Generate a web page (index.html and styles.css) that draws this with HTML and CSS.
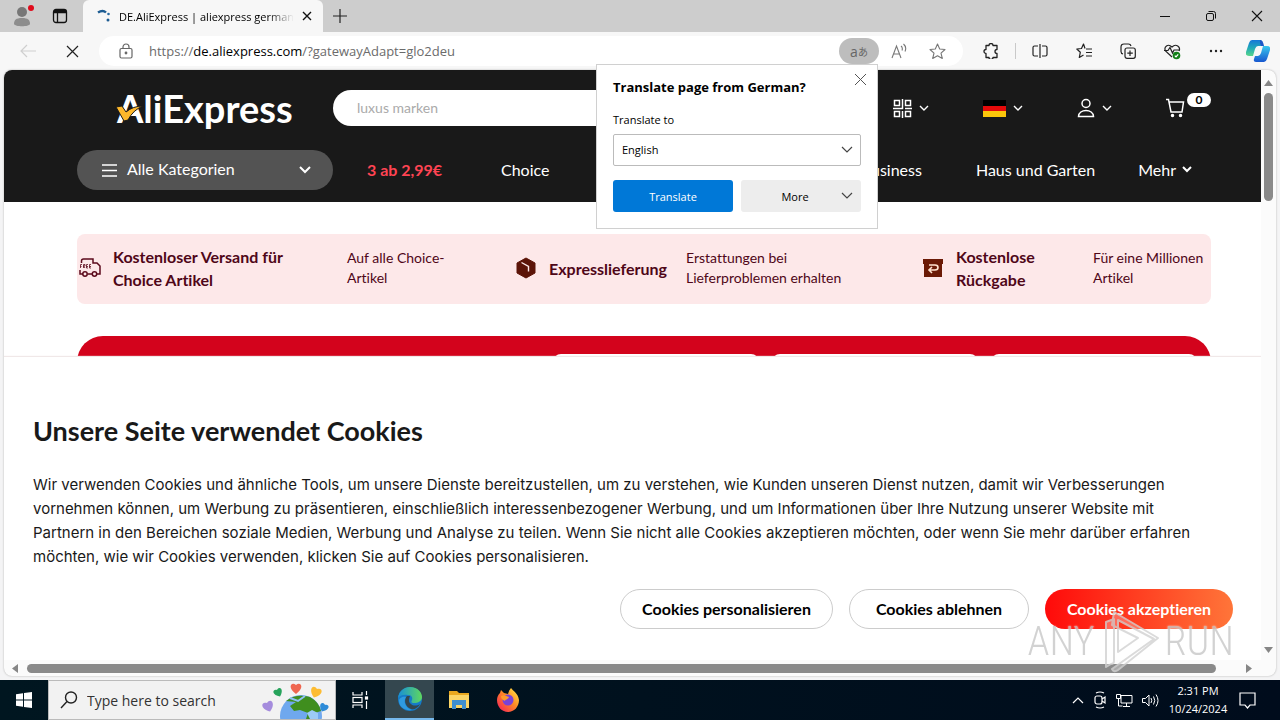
FILE: index.html
```html
<!DOCTYPE html>
<html lang="de">
<head>
<meta charset="utf-8">
<title>DE.AliExpress</title>
<link rel="stylesheet" href="styles.css">
</head>
<body>
<div class="browser">
  <div class="tabstrip">
    <button class="icon-btn profile" aria-label="Profile">
      <svg width="26" height="24" viewBox="0 0 26 24"><circle cx="12" cy="8" r="5" fill="#777"/><path d="M4 20c0-4 2-6 8-6s8 2 8 6c-1 3-15 3-16 0z" fill="#8d8d8d"/><circle cx="21" cy="4" r="3" fill="#e00b1c"/></svg>
    </button>
    <button class="icon-btn workspaces" aria-label="Tab actions">
      <svg width="16" height="16" viewBox="0 0 16 16" fill="none" stroke="#111" stroke-width="1.3"><rect x="1.5" y="1.5" width="13" height="13" rx="2.5"/><path d="M1.5 4.5h13M5.5 4.5v10" /><path d="M2 3h12" stroke-width="2"/></svg>
    </button>
    <div class="tab">
      <svg width="14" height="14" viewBox="0 0 14 14" fill="none"><path d="M1 3.5c3-2 6-2 8 0" stroke="#1d5c92" stroke-width="2.4"/><circle cx="11.500" cy="5" r="1.300" fill="#2b6ba3"/><circle cx="11" cy="11" r="1.500" fill="#1d5c92"/></svg>
      <span class="tab-title">DE.AliExpress | aliexpress german</span>
      <button class="icon-btn" aria-label="Close tab"><svg width="10" height="10" viewBox="0 0 10 10" stroke="#111" stroke-width="1.4"><path d="M1 1l8 8M9 1L1 9"/></svg></button>
    </div>
    <button class="icon-btn newtab" aria-label="New tab"><svg width="14" height="14" viewBox="0 0 14 14" stroke="#222" stroke-width="1.2"><path d="M7 0v14M0 7h14"/></svg></button>
    <div class="window-controls">
      <button class="icon-btn" aria-label="Minimize"><svg width="12" height="12" viewBox="0 0 12 12" stroke="#111"><path d="M1 6.500h10"/></svg></button>
      <button class="icon-btn" aria-label="Restore"><svg width="12" height="12" viewBox="0 0 12 12" fill="none" stroke="#111"><rect x="1.500" y="3.500" width="7" height="7" rx="1.500"/><path d="M3.500 1.500h5q2 0 2 2v5"/></svg></button>
      <button class="icon-btn" aria-label="Close"><svg width="12" height="12" viewBox="0 0 12 12" stroke="#111" stroke-width="1.100"><path d="M1 1l10 10M11 1L1 11"/></svg></button>
    </div>
  </div>

  <div class="toolbar">
    <button class="icon-btn back" aria-label="Back"><svg width="16" height="14" viewBox="0 0 16 14" fill="none" stroke="#cfcfcf" stroke-width="1.200"><path d="M16 7H1M7 1L1 7l6 6"/></svg></button>
    <button class="icon-btn stop" aria-label="Stop"><svg width="13" height="13" viewBox="0 0 13 13" stroke="#222" stroke-width="1.200"><path d="M1 1l11 11M12 1L1 12"/></svg></button>
    <div class="address">
      <svg width="14" height="16" viewBox="0 0 14 16" fill="none" stroke="#666" stroke-width="1.200"><rect x="1" y="5.500" width="12" height="9.500" rx="1.500"/><path d="M4 5.500V4a3 3 0 0 1 6 0v1.500"/><circle cx="7" cy="10" r="0.800" fill="#666"/></svg>
      <span class="url">https://<b>de.aliexpress.com</b>/?gatewayAdapt=glo2deu</span>
      <button class="icon-btn translate-pill" aria-label="Translate">a<small>あ</small></button>
      <button class="icon-btn" aria-label="Read aloud"><svg width="16" height="16" viewBox="0 0 16 16" fill="none" stroke="#777" stroke-width="1.100"><path d="M1 15L5.500 3 10 15M2.500 11h6M10 3q2 1.500 1 4.500M12.500 1q3.500 3 1.500 7.500"/></svg></button>
      <button class="icon-btn" aria-label="Add to favorites"><svg width="17" height="17" viewBox="0 0 17 17" fill="none" stroke="#777" stroke-width="1.100" stroke-linejoin="round"><path d="M8.500 1l2.200 5 5.300.5-4 3.600 1.300 5.400-4.800-2.800-4.800 2.800L5 10.100 1 6.500 6.300 6z"/></svg></button>
    </div>
    <div class="tools">
      <button class="icon-btn" aria-label="Extensions"><svg width="16" height="16" viewBox="0 0 16 16" fill="none" stroke="#222" stroke-width="1.300" stroke-linejoin="round"><path d="M3 2.500h3a2 2 0 0 1 4 0h4v4a2 2 0 0 0 0 4v4h-4a2 2 0 0 1-4 0H3v-4a2 2 0 0 1 0-4z"/></svg></button>
      <span class="divider"></span>
      <button class="icon-btn" aria-label="Split screen"><svg width="16" height="16" viewBox="0 0 16 16" fill="none" stroke="#222" stroke-width="1.200"><path d="M6 3H2.500Q1 3 1 4.500v7Q1 13 2.500 13H6M10 3h3.500Q15 3 15 4.500v7q0 1.500-1.500 1.500H10M8 1v14"/></svg></button>
      <button class="icon-btn" aria-label="Favorites"><svg width="16" height="16" viewBox="0 0 16 16" fill="none" stroke="#222" stroke-width="1.200" stroke-linejoin="round"><path d="M9 5.500L7.500 1 5.500 5.500.8 6l3.500 3.300L3.300 14.500 7.500 12M10 6h6M10 9.500h6M10 13h6"/></svg></button>
      <button class="icon-btn" aria-label="Collections"><svg width="16" height="16" viewBox="0 0 16 16" fill="none" stroke="#222" stroke-width="1.200"><path d="M3 11Q1 10.500 1 8.500V4q0-3 3-3h4.500q2 0 2.500 2"/><rect x="5" y="5" width="10.300" height="10.300" rx="2"/><path d="M10 7.500v5.500M7.300 10.200h5.500"/></svg></button>
      <button class="icon-btn" aria-label="Browser essentials"><svg width="17" height="17" viewBox="0 0 17 17" fill="none" stroke="#222" stroke-width="1.200"><path d="M8 14L1.500 8C-.5 4 4 0 8 4c4-4 9 0 7 4M0 7.500h4l2-3 2.500 5.500L10 7h6"/><circle cx="12.500" cy="12.500" r="3.800" fill="#138018" stroke="none"/><path d="M10.800 12.700l1.200 1.200 2.200-2.500" stroke="#fff"/></svg></button>
      <button class="icon-btn" aria-label="Settings and more"><svg width="14" height="4" viewBox="0 0 14 4" fill="#222"><circle cx="2" cy="2" r="1.200"/><circle cx="7" cy="2" r="1.200"/><circle cx="12" cy="2" r="1.200"/></svg></button>
      <button class="icon-btn copilot" aria-label="Copilot"><svg width="24" height="24" viewBox="0 0 24 24"><defs><linearGradient id="cpa" x1="0" y1="0" x2="0" y2="1"><stop offset="0" stop-color="#1677d8"/><stop offset=".5" stop-color="#21aab8"/><stop offset="1" stop-color="#58d68a"/></linearGradient><linearGradient id="cpb" x1="0" y1="0" x2="0" y2="1"><stop offset="0" stop-color="#39c7ee"/><stop offset="1" stop-color="#1757cf"/></linearGradient></defs><path d="M6 1h8q3 0 2 3l-1 3h-3q-2 0-3 3l-2 7H3q-4 0-3-4L3 4q1-3 3-3z" fill="url(#cpa)"/><path d="M18 23h-8q-3 0-2-3l1-3h3q2 0 3-3l2-7h4q4 0 3 4l-3 9q-1 3-3 3z" fill="url(#cpb)"/><path d="M14 1q3 0 4 6h-3l-1-3z" fill="#1c56c7"/></svg></button>
    </div>
  </div>

  <div class="viewport">
    <div class="page">
      <header class="site-header">
        <div class="header-top">
          <a class="logo" href="#">AliExpress<svg class="logo-check" width="29" height="18" viewBox="0 0 29 18"><path d="M1 3l6-1 4 6Q18 2 28 2 18 6 13 16L9 17z" fill="#fdb72b" stroke="#191919"/></svg></a>
          <input class="search" type="text" placeholder="luxus marken" aria-label="Suche">
          <div class="header-actions">
            <button class="icon-btn" aria-label="App"><svg width="19" height="19" viewBox="0 0 19 19" fill="none" stroke="#fff" stroke-width="1.500"><rect x="1.500" y="1.500" width="5" height="5"/><rect x="12.500" y="1.500" width="5" height="5"/><rect x="1.500" y="12.500" width="5" height="5"/><rect x="12.500" y="12.500" width="5" height="5"/><path d="M9.500 0v9.500H0M12 9.500h7M9.500 12v7"/></svg><svg class="chev" width="10" height="6" viewBox="0 0 10 6"><path d="M1 1l4 4 4-4"/></svg></button>
            <button class="icon-btn" aria-label="Deutschland"><svg width="23" height="17" viewBox="0 0 23 17"><path d="M0 0h23v6H0z" fill="#000"/><path d="M0 6h23v5H0z" fill="#e50a0a"/><path d="M0 11h23v6H0z" fill="#fbc60b"/></svg><svg class="chev" width="10" height="6" viewBox="0 0 10 6"><path d="M1 1l4 4 4-4"/></svg></button>
            <button class="icon-btn" aria-label="Konto"><svg width="18" height="20" viewBox="0 0 18 20" fill="none" stroke="#fff" stroke-width="1.500"><circle cx="9" cy="5.500" r="4"/><path d="M1.500 18.500c0-8 15-8 15 0z"/></svg><svg class="chev" width="10" height="6" viewBox="0 0 10 6"><path d="M1 1l4 4 4-4"/></svg></button>
            <button class="icon-btn cart" aria-label="Warenkorb"><svg width="19" height="20" viewBox="0 0 19 20" fill="none" stroke="#fff" stroke-width="1.500"><path d="M0 1.500h2.500l2.500 12.500h11l1.500-10H3.500"/><circle cx="6.500" cy="17.500" r="1" fill="#fff"/><circle cx="14.500" cy="17.500" r="1" fill="#fff"/></svg><span class="cart-count">0</span></button>
          </div>
        </div>
        <nav class="header-nav">
          <button class="categories"><svg width="15" height="13" viewBox="0 0 15 13" stroke="#fff" stroke-width="1.500"><path d="M0 1h15M0 6.500h15M0 12h15"/></svg><span>Alle Kategorien</span><svg class="chev" width="12" height="8" viewBox="0 0 12 8"><path d="M1 1l5 5 5-5" stroke-width="2"/></svg></button>
          <a class="promo" href="#">3 ab 2,99€</a>
          <a href="#">Choice</a>
          <a class="push" href="#">Business</a>
          <a href="#">Haus und Garten</a>
          <a class="more-link" href="#">Mehr <svg class="chev" width="10" height="7" viewBox="0 0 10 7"><path d="M1 1l4 4 4-4" stroke-width="2"/></svg></a>
        </nav>
      </header>
      <main class="content">
        <section class="benefits">
          <div class="benefit">
            <svg width="22" height="20" viewBox="0 0 22 20" fill="none" stroke="#5c0a1c" stroke-width="1.500"><path d="M2.500 5V3q0-2 2-2h9.500v4h4l3 3v8h-3M4 16H1v-4M8.500 16h5"/><circle cx="6" cy="16" r="2.200"/><circle cx="15.500" cy="16" r="2.200"/><path d="M1.500 10V6.500h1.500M1.500 8.500h1M4.500 10V6.500h1.500v1.500H4.500l1.500 2M9 6.500H7.500V10H9M7.500 8.500H9M12 6.500h-1.500V10H12M10.500 8.500H12" stroke-width=".8"/></svg>
            <h3 class="wide">Kostenloser Versand für Choice Artikel</h3><p class="short">Auf alle Choice-Artikel</p>
          </div>
          <div class="benefit">
            <svg width="22" height="22" viewBox="0 0 22 22"><path d="M11 1l9 5v10l-9 5-9-5V6z" fill="#5c1408" stroke="#5c1408" stroke-linejoin="round"/><path d="M6.500 5.500l7 4v5" fill="none" stroke="#fde8e9" stroke-width="1.400"/></svg>
            <h3>Expresslieferung</h3><p>Erstattungen bei Lieferproblemen erhalten</p>
          </div>
          <div class="benefit">
            <svg width="22" height="20" viewBox="0 0 22 20"><path d="M1 1h20v5h-1v13H2V6H1z" fill="#6b1a06"/><path d="M7 7h6q3 0 3 2.500t-3 2.500H8M10 9l-3 3 3 3" fill="none" stroke="#ffe3cf" stroke-width="1.600"/></svg>
            <h3>Kostenlose Rückgabe</h3><p>Für eine Millionen Artikel</p>
          </div>
        </section>
        <section class="deals"><div class="deal-card"></div><div class="deal-card"></div><div class="deal-card"></div></section>
      </main>
      <section class="cookie-banner">
        <h2>Unsere Seite verwendet Cookies</h2>
        <p>Wir verwenden Cookies und ähnliche Tools, um unsere Dienste bereitzustellen, um zu verstehen, wie Kunden unseren Dienst nutzen, damit wir Verbesserungen<br>vornehmen können, um Werbung zu präsentieren, einschließlich interessenbezogener Werbung, und um Informationen über Ihre Nutzung unserer Website mit<br>Partnern in den Bereichen soziale Medien, Werbung und Analyse zu teilen. Wenn Sie nicht alle Cookies akzeptieren möchten, oder wenn Sie mehr darüber erfahren<br>möchten, wie wir Cookies verwenden, klicken Sie auf Cookies personalisieren.</p>
        <div class="cookie-actions">
          <button class="customize">Cookies personalisieren</button>
          <button class="reject">Cookies ablehnen</button>
          <button class="accept">Cookies akzeptieren</button>
        </div>
      </section>
    </div>
    <div class="vscroll"><svg width="9" height="6" viewBox="0 0 9 6"><path d="M0 6l4.500-6L9 6z"/></svg><span class="vthumb"></span><svg class="down" width="9" height="6" viewBox="0 0 9 6"><path d="M0 0l4.500 6L9 0z"/></svg></div>
    <div class="hscroll"><svg width="6" height="9" viewBox="0 0 6 9"><path d="M6 0L0 4.500 6 9z"/></svg><span class="hthumb"></span><svg width="6" height="9" viewBox="0 0 6 9"><path d="M0 0l6 4.500L0 9z"/></svg></div>
  </div>

  <div class="popup" role="dialog" aria-labelledby="popup-title">
    <button class="icon-btn popup-close" aria-label="Close"><svg width="13" height="13" viewBox="0 0 13 13" stroke="#555"><path d="M1 1l11 11M12 1L1 12"/></svg></button>
    <h2 id="popup-title">Translate page from German?</h2>
    <label for="lang">Translate to</label>
    <div class="select-wrap"><select id="lang"><option>English</option></select><svg class="dark-chev" width="12" height="8" viewBox="0 0 12 8"><path d="M1 1l5 5 5-5"/></svg></div>
    <div class="popup-actions"><button class="primary">Translate</button><button class="secondary">More<svg class="dark-chev" width="12" height="8" viewBox="0 0 12 8"><path d="M1 1l5 5 5-5"/></svg></button></div>
  </div>

  <div class="watermark"><span>ANY</span><svg width="60" height="64" viewBox="0 0 60 64" fill="none" stroke="#d2d2d2" stroke-width="2" stroke-linejoin="round"><path d="M6 12l8-3v42q0 3-3 3l-5 3zM14 2l44 26-40 32q-4 3-6-1l42-30-36-19v32l20-14-26-13z" fill="#fff" fill-opacity=".35"/></svg><span>RUN</span></div>
</div>

<footer class="taskbar">
  <button class="icon-btn start" aria-label="Start"><svg width="16" height="16" viewBox="0 0 16 16" fill="#fff"><path d="M0 2.200l7-1v6.300H0zM8 1l8-1v7.500H8zM0 8.500h7v6.300l-7-1zM8 8.500h8V16l-8-1z"/></svg></button>
  <label class="task-search">
    <svg width="18" height="18" viewBox="0 0 18 18" fill="none" stroke="#222" stroke-width="1.400"><circle cx="11" cy="6.500" r="5.500"/><path d="M7 10.500L1 17"/></svg>
    <input type="text" placeholder="Type here to search">
    <svg width="70" height="38" viewBox="0 0 70 38"><defs><path id="heart" d="M0 9C-9 3-5-4 0 0c5-4 9 3 0 9z"/></defs><circle cx="40" cy="35" r="21" fill="#6fa8ee"/><path d="M25 20q10-8 24-4 9 5 11 14l-6 2-2 6h-7l2-6-8-3-6 1-4-5 6-4z" fill="#3f8e1e"/><path d="M46 32l5-3 6 3v6h-8z" fill="#9ccaf5"/><path d="M29 17l8 3 7-5" fill="none" stroke="#8ec1f4" stroke-width="2"/><use href="#heart" transform="translate(35 4)" fill="#ef6650"/><use href="#heart" transform="translate(16 9) rotate(-25) scale(.8)" fill="#27a35b"/><use href="#heart" transform="translate(56 8) rotate(20)" fill="#fdbc32"/><use href="#heart" transform="translate(6 22) rotate(-20)" fill="#a58cdd"/><use href="#heart" transform="translate(64 24) rotate(25) scale(.8)" fill="#2e8bd8"/></svg>
  </label>
  <button class="icon-btn task-item" aria-label="Task view"><svg width="17" height="18" viewBox="0 0 17 18" fill="none" stroke="#fff" stroke-width="1.200"><path d="M1 1v3h9V1M1 17v-3h9v3M14.500 0v4M14.500 10v8"/><rect x="1" y="6.500" width="9" height="5"/><rect x="13.500" y="6" width="2" height="2" fill="#fff"/></svg></button>
  <button class="icon-btn task-item active" aria-label="Edge"><svg width="24" height="24" viewBox="0 0 24 24"><defs><linearGradient id="eg" x1="0" x2="1"><stop offset="0" stop-color="#178fd8"/><stop offset="1" stop-color="#5fd85e"/></linearGradient></defs><circle cx="12" cy="12" r="12" fill="#157bc8"/><path d="M0 11C1 4 6 0 12 0c8 0 12 6 12 10 0 4-4 6-8 6-3 0-3-1-2-3 1-3-1-5-4-5C5 7 1 9 0 11z" fill="url(#eg)"/><path d="M9 9c-3 3-3 10 4 13 3 1 7-1 9-5-3 2-7 2-9 0-3-2-2-5-1-8z" fill="#34474f"/><path d="M8 10c-3 4-1 11 6 13-8 1-13-4-13-9 0-3 4-5 7-4z" fill="#2f9ae0"/></svg></button>
  <button class="icon-btn task-item" aria-label="File Explorer"><svg width="22" height="20" viewBox="0 0 22 20"><path d="M1 1h8l2 2h10v15H1z" fill="#e9a81f"/><path d="M1 5h20v13H1z" fill="#fbd566"/><path d="M4 10h14v9h-4v-4H8v4H4z" fill="#3f8fcf"/></svg></button>
  <button class="icon-btn task-item" aria-label="Firefox"><svg width="24" height="24" viewBox="0 0 24 24"><defs><linearGradient id="ff" x1="1" y1="0" x2="0" y2="1"><stop offset="0" stop-color="#fff04a"/><stop offset=".45" stop-color="#ff8a25"/><stop offset="1" stop-color="#f5155f"/></linearGradient></defs><path d="M15 0c2 3 7 5 8 12 0 7-5 12-11 12S1 19 1 12c0-3 1-5 3-7l1-3 3 3 4 1q1-4 3-6z" fill="url(#ff)"/><circle cx="12" cy="12" r="5.500" fill="#7a42d8"/><path d="M5 8c4-2 5 0 8 1-1 3-4 2-4 4-3-1-4-3-4-5z" fill="#ff9b2b"/></svg></button>
  <div class="tray">
    <svg width="12" height="7" viewBox="0 0 12 7" fill="none" stroke="#fff" stroke-width="1.200"><path d="M1 6l5-5 5 5"/></svg>
    <svg width="14" height="18" viewBox="0 0 14 18" fill="none" stroke="#fff" stroke-width="1.200"><path d="M3 2q4-2 8 0M3 16q4 2 8 0"/><rect x="2" y="5" width="7" height="8" rx="2"/><path d="M9 8l3-2v6l-3-2"/></svg>
    <svg width="17" height="15" viewBox="0 0 17 15" fill="none" stroke="#fff"><path d="M5 2.500h11v7.500H5zM7 13.500h7M10.500 10v3.500M.5 1.500h4v4h-4zM2.500 5.500v7.500h4"/></svg>
    <svg width="17" height="15" viewBox="0 0 17 15" fill="none" stroke="#fff"><path d="M.5 5.500h3L7 2v11L3.500 9.500h-3zM9 5q1.500 2.500 0 5M11.500 3.500q2.500 4 0 8M14 1.500q4 6 0 12"/></svg>
    <div class="clock"><span>2:31 PM</span><span>10/24/2024</span></div>
    <svg width="17" height="17" viewBox="0 0 17 17" fill="none" stroke="#fff" stroke-width="1.200"><path d="M1 1h15v12h-5l-2.500 3L6 13H1z"/></svg>
  </div>
</footer>
</body>
</html>
```
FILE: styles.css
```css
* { box-sizing: border-box; }
body { margin: 0; height: 100vh; display: flex; flex-direction: column; overflow: hidden; font-family: "Open Sans", "Noto Sans CJK JP", sans-serif; font-size: 12px; color: #000; }
button, input, select { font: inherit; color: inherit; }
h2, h3, p { margin: 0; }
a { color: inherit; text-decoration: none; }
svg { flex: none; display: block; }
.icon-btn { display: flex; align-items: center; justify-content: center; padding: 0; border: 0; background: none; }

.browser { flex: 1; min-height: 0; position: relative; display: flex; flex-direction: column; background: #f4f4f5; }
.tabstrip { height: 32px; display: flex; align-items: center; background: #cdcdcd; }
.profile { margin-left: 10px; width: 26px; }
.workspaces { margin: 0 15px 0 16px; }
.tab { width: 240px; height: 32px; display: flex; align-items: center; gap: 8px; padding: 0 11px 0 14px; background: #f7f7f7; border-radius: 6px 6px 0 0; }
.tab-title { flex: 1; white-space: nowrap; font-size: 11px; mask-image: linear-gradient(90deg, #000 85%, transparent); }
.newtab { margin-left: 10px; }
.window-controls { margin-left: auto; display: flex; gap: 34px; padding-right: 17px; }

.toolbar { height: 38px; display: flex; align-items: center; background: #f7f7f7; }
.back { margin-left: 20px; }
.stop { margin: 0 20px 0 30px; }
.address { flex: 1; height: 30px; display: flex; align-items: center; gap: 16px; padding: 0 17px 0 20px; border-radius: 15px; background: #fff; }
.url { flex: 1; font-size: 13px; color: #6b6b6b; }
.url b { color: #000; font-weight: 400; }
.translate-pill { width: 40px; height: 26px; margin-right: -4px; border-radius: 13px; background: #bdbdbd; color: #666; font-size: 14px; }
.translate-pill small { font-size: 10px; }
.address .icon-btn + .icon-btn + .icon-btn { margin-left: 6px; }
.tools { display: flex; align-items: center; gap: 28px; padding: 0 10px 0 20px; }
.divider { width: 1px; height: 16px; margin: 0 -12px; background: #c9c9c9; }
.copilot { margin-left: -5px; }

.viewport { flex: 1; min-height: 0; margin: 0 4px 4px; display: grid; grid-template-columns: 1fr 15px; grid-template-rows: 1fr 16px; overflow: hidden; border-radius: 8px; background: #fbfbfb; box-shadow: 0 0 2px #aaa; }
.page { position: relative; overflow: hidden; background: #fff; font-family: Lato, sans-serif; font-size: 16px; font-variant-ligatures: none; }

.site-header { padding: 18px 50px 12px 73px; background: #191919; color: #fff; }
.header-top { height: 62px; padding-bottom: 22px; display: flex; align-items: center; }
.logo { position: relative; width: 178px; margin: 0 38px 0 40px; font-size: 38px; line-height: 40px; font-weight: 700; }
.logo-check { position: absolute; left: -2px; top: 16px; }
.search { flex: 1; min-width: 0; height: 36px; padding: 0 24px 2px; border: 0; border-radius: 18px; font-family: Lato, sans-serif; font-size: 14px; background: #fff; color: #000; }
.search::placeholder { color: #aaa; opacity: 1; }
.header-actions { display: flex; align-items: center; gap: 54px; margin-left: 45px; }
.header-actions .icon-btn { gap: 7px; }
.chev { fill: none; stroke: #fff; stroke-width: 1.4; }
.header-actions .cart { gap: 2px; }
.cart-count { width: 24px; height: 14px; margin-bottom: 16px; border-radius: 7px; background: #fff; color: #000; font-size: 12px; line-height: 13px; font-weight: 700; }
.header-nav { height: 40px; display: flex; align-items: center; white-space: nowrap; gap: 54px; }
.header-nav > a { padding-bottom: 2px; }
.categories { width: 256px; height: 40px; margin-right: -20px; display: flex; align-items: center; gap: 10px; padding: 0 22px 0 25px; border: 0; border-radius: 20px; background: #535353; text-align: left; }
.categories span { flex: 1; padding-bottom: 4px; }
.promo { width: 80px; color: #ff4453; font-weight: 700; }
.push { margin-left: auto; }
.header-nav .more-link { display: flex; align-items: center; gap: 6px; margin: 0 19px 0 -11px; }

.content { padding: 32px 50px 0 73px; }
.benefits { height: 70px; display: grid; grid-template-columns: 436fr 407fr 291fr; border-radius: 8px; background: #fde8e9; color: #4f0618; }
.benefit { display: flex; align-items: center; gap: 12px; padding: 0 0 2px 2px; }
.benefit h3 { width: 125px; font-size: 16px; line-height: 23px; }
.benefit h3.wide { width: 222px; padding-right: 30px; }
.benefit p { width: 164px; font-size: 14px; line-height: 20px; }
.benefit p.short { width: 110px; }
.benefit:last-child p { flex: 1; width: auto; }
.deals { margin-top: 32px; height: 120px; display: flex; justify-content: flex-end; gap: 13px; padding: 18px 14px 0; border-radius: 26px 26px 0 0; background: #d3031c; }
.deal-card { width: 206px; border-radius: 8px 8px 0 0; background: #fff; }

.cookie-banner { position: absolute; left: 0; right: 0; bottom: 0; height: 303px; padding: 56px 28px 0 29px; background: #fff; box-shadow: 0 -1px 1px #f0e8e8; color: #191919; }
.cookie-banner h2 { font-size: 27px; line-height: 36px; }
.cookie-banner p { margin-top: 24px; font-family: Inter, sans-serif; font-size: 15px; line-height: 24px; white-space: nowrap; }
.cookie-actions { display: flex; justify-content: flex-end; gap: 16px; margin-top: 20px; }
.cookie-actions button { height: 40px; padding: 0 0 2px; border: 1px solid #ccc; border-radius: 20px; background: #fff; color: #000; font-weight: 700; }
.customize { width: 213px; }
.reject { width: 180px; }
.cookie-actions .accept { width: 188px; border: 0; background: linear-gradient(90deg, #ff0a0a, #ff7539); color: #fff; }

.vscroll { display: flex; flex-direction: column; align-items: center; padding: 10px 0 7px; fill: #868686; }
.vthumb { width: 9px; height: 108px; margin-top: 7px; border-radius: 5px; background: #8a8a8a; }
.down { margin-top: auto; }
.hscroll { grid-column: 1 / 3; display: flex; align-items: center; padding: 0 24px 0 8px; fill: #868686; }
.hthumb { flex: 1; height: 9px; margin: 0 30px 0 9px; border-radius: 5px; background: #8a8a8a; }

.popup { position: absolute; right: 402px; top: 64px; width: 282px; padding: 12px 16px 16px; border: 1px solid #d0d0d0; background: #fff; }
.popup h2 { font-size: 13px; line-height: 20px; }
.popup label { display: block; margin-top: 15px; line-height: 16px; font-size: 11px; }
.popup-close { position: absolute; top: 8px; right: 10px; }
.select-wrap { position: relative; margin-top: 6px; }
.select-wrap select { width: 100%; height: 32px; padding: 0 8px 2px; appearance: none; border: 1px solid #bbb; border-radius: 2px; background: #fff; font-size: 11px; }
.dark-chev { position: absolute; right: 8px; top: 12px; fill: none; stroke: #444; stroke-width: 1.2; }
.popup-actions { display: flex; gap: 8px; margin-top: 14px; }
.popup-actions button { position: relative; width: 120px; height: 32px; padding: 0; border: 0; border-radius: 3px; font-size: 11px; }
.popup-actions .primary { background: #0078d7; color: #fff; }
.popup-actions .secondary { background: #ededed; padding-right: 12px; }

.watermark { position: absolute; right: 46px; bottom: 6px; display: flex; align-items: center; gap: 5px; color: #c8c8c8; font-family: "Roboto Condensed", Roboto, sans-serif; font-size: 40px; line-height: 40px; font-weight: 300; text-shadow: 0 0 2px #fff; pointer-events: none; opacity: .8; }

.taskbar { height: 40px; display: flex; align-items: stretch; background: linear-gradient(90deg, #001620, #000c1c); color: #fff; }
.start { width: 48px; }
.task-search { width: 288px; display: flex; align-items: center; gap: 9px; padding: 0 4px 0 11px; border: 1px solid #bbb; background: #f2f2f2; color: #222; }
.task-search input { flex: 1; min-width: 0; padding: 0; border: 0; background: none; font-size: 14px; }
.task-search input::placeholder { color: #333; opacity: 1; }
.task-item { width: 49px; }
.active { background: #34474f; border-bottom: 2px solid #76b9ed; }
.tray { margin-left: auto; display: flex; align-items: center; gap: 9px; padding-right: 24px; }
.clock { display: flex; flex-direction: column; width: 60px; margin-right: 2px; text-align: center; font-size: 11px; line-height: 18px; }
```
